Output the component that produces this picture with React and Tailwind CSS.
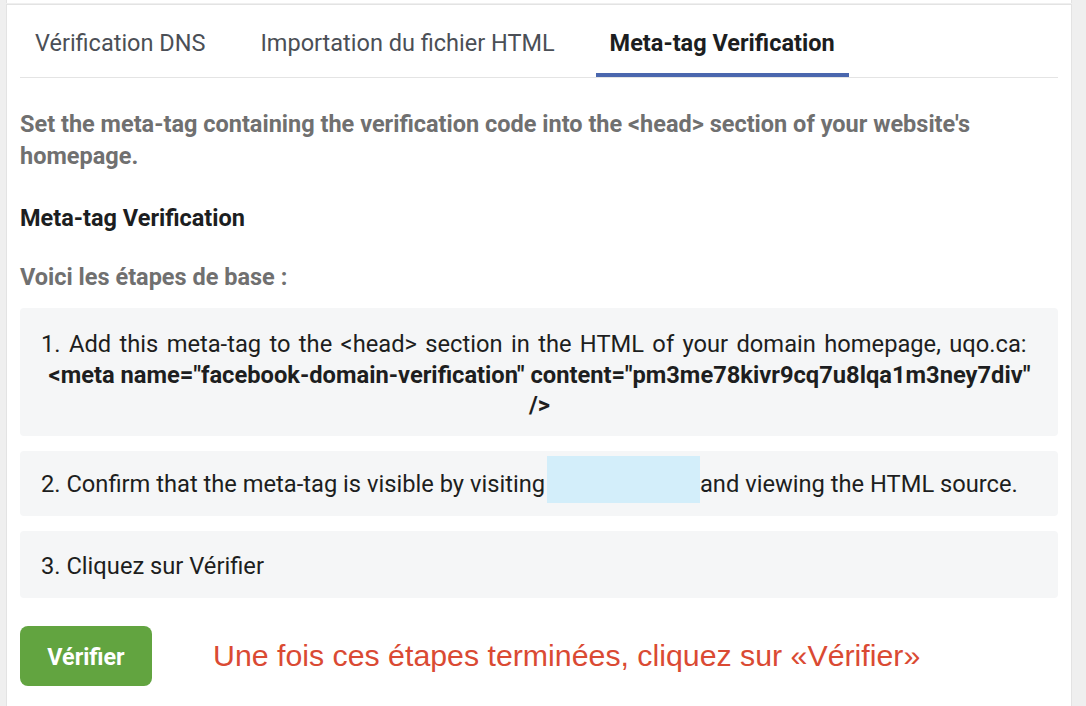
import React from 'react';

const tabs = ['Vérification DNS', 'Importation du fichier HTML', 'Meta-tag Verification'];

// One grey step box
const Step = ({ children, className = '' }) => (
    <div className={`bg-[#f5f6f7] rounded-[4px] pl-[21px] pr-[20px] text-[23.7px] leading-[30.5px] text-[#1d1e20] ${className}`}>
        {children}
    </div>
);

function App() {
    const active = 2;

    return (
        <div className="min-h-screen bg-[#efefef] pl-[6px] pr-[14px] font-['Roboto',sans-serif]">
            <div className="h-[3px] bg-white border-x border-[#e3e3e3]" />
            <div className="mt-px bg-white border border-[#e3e3e3] px-[13px] pb-[40px]">
                {/* Tabs */}
                <div className="flex gap-[27px] border-b border-[#e4e4e4] pl-px">
                    {tabs.map((t, i) => (
                        <div
                            key={t}
                            className={`px-[14px] pt-[24px] pb-[16px] text-[23.5px] leading-[28px] border-b-4 ${i === active ? 'border-[#4a67ae] font-bold text-[#1c1e21]' : 'border-transparent text-[#4b4f56]'}`}
                        >
                            {t}
                        </div>
                    ))}
                </div>

                <p className="mt-[30px] text-[23.5px] leading-[32px] font-bold text-[#707070]">
                    Set the meta-tag containing the verification code into the &lt;head&gt; section of your website's
                    <br />
                    homepage.
                </p>

                <h3 className="mt-[30px] text-[23.5px] leading-[32px] font-bold text-[#1c1e21]">Meta-tag Verification</h3>

                <p className="mt-[27px] text-[23.5px] leading-[32px] font-bold text-[#707070]">Voici les étapes de base :</p>

                <div className="mt-[15px] flex flex-col gap-[15px]">
                    <Step className="pt-[21px] pb-[15px]">
                        <div className="[word-spacing:2.5px]">
                            1. Add this meta-tag to the &lt;head&gt; section in the HTML of your domain homepage, uqo.ca:
                        </div>
                        <div className="text-center font-bold">
                            &lt;meta name="facebook-domain-verification" content="pm3me78kivr9cq7u8lqa1m3ney7div" /&gt;
                        </div>
                    </Step>
                    <Step className="h-[65px] pt-[6px] flex items-center">
                        <div>
                            2. Confirm that the meta-tag is visible by visiting{' '}
                            <span className="inline-block w-[153px] h-[47px] align-middle -mt-[14px] -ml-[4px] bg-[#d3eefa]" />
                            and viewing the HTML source.
                        </div>
                    </Step>
                    <Step className="h-[67px] pt-[4px] flex items-center">3. Cliquez sur Vérifier</Step>
                </div>

                <div className="mt-[28px] flex items-center gap-[61px]">
                    <button className="w-[132px] h-[60px] pt-[4px] rounded-[8px] bg-[#62a440] text-white text-[23.3px] font-bold">
                        Vérifier
                    </button>
                    <span className="font-['Liberation_Sans',Arial,sans-serif] text-[30.3px] text-[#da4a33]">
                        Une fois ces étapes terminées, cliquez sur «Vérifier»
                    </span>
                </div>
            </div>
        </div>
    );
}

export default App;
